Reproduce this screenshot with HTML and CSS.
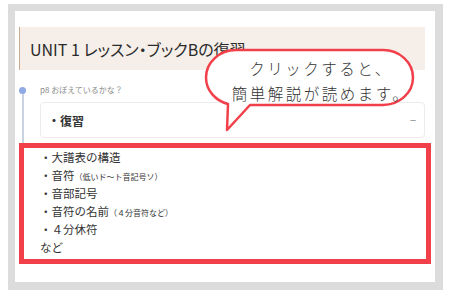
FILE: index.html
```html
<!DOCTYPE html>
<html lang="ja">
<head>
  <meta charset="UTF-8" />
  <meta name="viewport" content="width=device-width, initial-scale=1.0"/>
  <title>UNIT 1 レッスン・ブックBの復習</title>

  <link rel="stylesheet" href="styles.css">
</head>

<body>
  <div class="frame">
    <h1 class="title">UNIT 1 レッスン・ブックBの復習</h1>

    <div class="entry">
      <div class="rail">
        <span class="dot"></span>
        <span class="line"></span>
      </div>

      <div class="entry-body">
        <p class="label">p8 おぼえているかな？</p>

        <div class="card">
          <span class="card-title">・復習</span>
          <span class="toggle">−</span>
        </div>

        <div class="answer">
          <p>・大譜表の構造</p>
          <p>・音符<small>（低いド〜ト音記号ソ）</small></p>
          <p>・音部記号</p>
          <p>・音符の名前<small>（４分音符など）</small></p>
          <p>・４分休符</p>
          <p>など</p>
        </div>
      </div>
    </div>

    <!-- callout over the page -->
    <div class="bubble">
      <svg class="bubble-shape" width="214" height="86" viewBox="0 0 214 86">
        <path d="M32 2 H179 A30 27.5 0 0 1 209 29.5 A30 27.5 0 0 1 179 57 H46 L23 82 L24 56 A30 27.5 0 0 1 2 29.5 A30 27.5 0 0 1 32 2 Z"
              fill="#fff" stroke="#f2404b" stroke-width="2.5" stroke-linejoin="round"/>
      </svg>
      <div class="bubble-text">
        <span>クリックすると、</span>
        <span>簡単解説が読めます。</span>
      </div>
    </div>
  </div>
</body>
</html>
```

FILE: styles.css
```css
body {
  margin: 0;
  background: #fff;
  color: #333;
  font-family: "Noto Sans CJK JP", "Noto Sans", sans-serif;
}

.frame {
  position: relative;
  margin: 4px 7px 10px 8px;
  border-style: solid;
  border-color: #dcdcdc;
  border-width: 7px 8px 8px 7px;
  padding: 16px 10px 5px 4px;
  background: #fff;
}

.title {
  margin: 0;
  height: 43px;
  display: flex;
  align-items: center;
  padding-left: 10px;
  background: #f6efe9;
  border-left: 1px solid #c9aa8e;
  font-size: 16px;
  font-weight: 400;
  font-feature-settings: "palt";
  color: #2b2b2b;
}

.entry {
  display: flex;
  padding-bottom: 13px;
}

.rail {
  width: 7px;
  display: flex;
  flex-direction: column;
  align-items: center;
  padding-top: 17px;
}

.dot {
  width: 7px;
  height: 7px;
  border-radius: 50%;
  background: #8fa8e6;
}

.line {
  flex: 1;
  width: 2px;
  background: #c9d3e2;
}

.entry-body {
  flex: 1;
  margin-left: 14px;
  padding-top: 14px;
}

.label {
  margin: 0;
  font-size: 8px;
  line-height: 12px;
  color: #8a8a8a;
}

.card {
  margin-top: 6px;
  height: 36px;
  box-sizing: border-box;
  border: 1px solid #ececec;
  border-radius: 4px;
  display: flex;
  align-items: center;
  justify-content: space-between;
  padding: 0 8px 0 7px;
}

.card-title {
  font-size: 12px;
  font-weight: 700;
  color: #333;
}

.toggle {
  font-size: 11px;
  color: #8a8a8a;
}

.answer {
  margin: 5px -6px 0 -21px;
  border: 5px solid #f2404b;
  background: #fff;
  padding: 0 0 3px 16px;
}

.answer p {
  margin: 0;
  height: 18px;
  font-size: 11.5px;
  line-height: 18px;
  color: #333;
}

.answer small {
  font-size: 8px;
  line-height: 1;
}

.bubble {
  position: absolute;
  left: 189px;
  top: 37px;
  width: 214px;
  height: 86px;
}

.bubble-shape {
  position: absolute;
  left: 0;
  top: 0;
}

.bubble-text {
  position: relative;
  padding: 8px 0 0 20px;
  display: flex;
  flex-direction: column;
  align-items: center;
  font-size: 15.5px;
  font-weight: 300;
  letter-spacing: 2.5px;
  line-height: 25px;
  color: #333;
}
```
